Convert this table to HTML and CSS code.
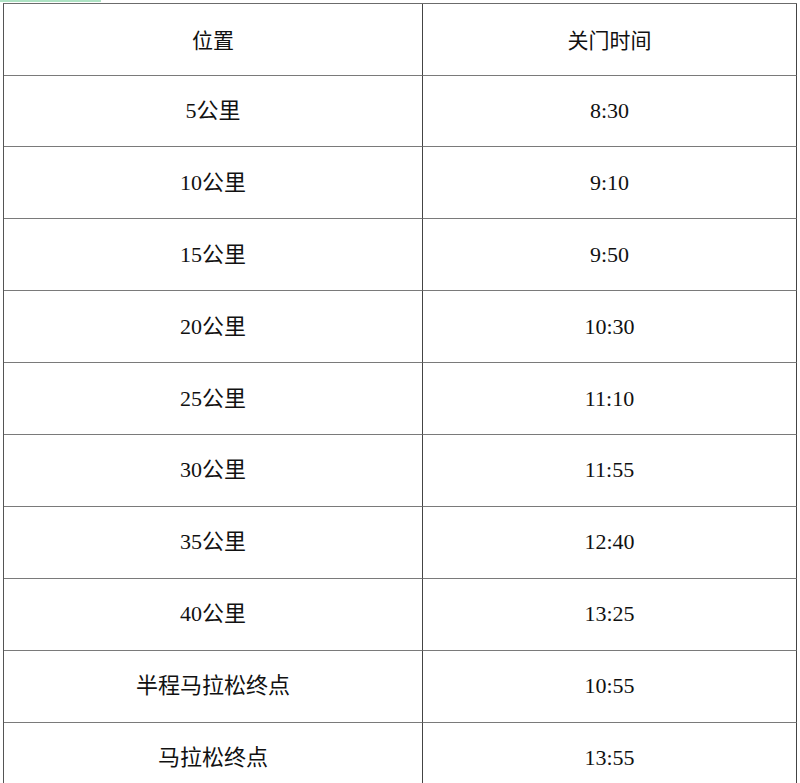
FILE: index.html
```html
<!DOCTYPE html>
<html lang="zh-CN">
<head>
<meta charset="utf-8">
<title>关门时间</title>
<link rel="stylesheet" href="styles.css">
</head>
<body>
<div class="greenbar"></div>
<div class="tbl">
  <div class="cell head">位置</div><div class="cell head">关门时间</div>
  <div class="cell">5公里</div><div class="cell">8:30</div>
  <div class="cell">10公里</div><div class="cell">9:10</div>
  <div class="cell">15公里</div><div class="cell">9:50</div>
  <div class="cell">20公里</div><div class="cell">10:30</div>
  <div class="cell">25公里</div><div class="cell">11:10</div>
  <div class="cell">30公里</div><div class="cell">11:55</div>
  <div class="cell">35公里</div><div class="cell">12:40</div>
  <div class="cell">40公里</div><div class="cell">13:25</div>
  <div class="cell">半程马拉松终点</div><div class="cell">10:55</div>
  <div class="cell">马拉松终点</div><div class="cell">13:55</div>
</div>
</body>
</html>
```

FILE: styles.css
```css
html, body {
  margin: 0;
  padding: 0;
  background: #ffffff;
}
body {
  font-family: "Liberation Serif", "Noto Sans CJK SC", serif;
  color: #111111;
  overflow: hidden;
}
.greenbar {
  width: 101px;
  height: 2px;
  background: #aee3c4;
}
.tbl {
  display: grid;
  grid-template-columns: 419px 374px;
  grid-template-rows: 71.5px repeat(10, 71.9px);
  margin: 1px 0 0 3px;
  width: max-content;
  border-top: 1px solid #6b6b6b;
  border-left: 1px solid #555;
}
.cell {
  display: flex;
  align-items: center;
  justify-content: center;
  border-right: 1px solid #444;
  border-bottom: 1px solid #7a7a7a;
  font-size: 22px;
  line-height: 1;
}
.head {
  font-family: "Noto Sans CJK SC", sans-serif;
  font-size: 21px;
}
```
